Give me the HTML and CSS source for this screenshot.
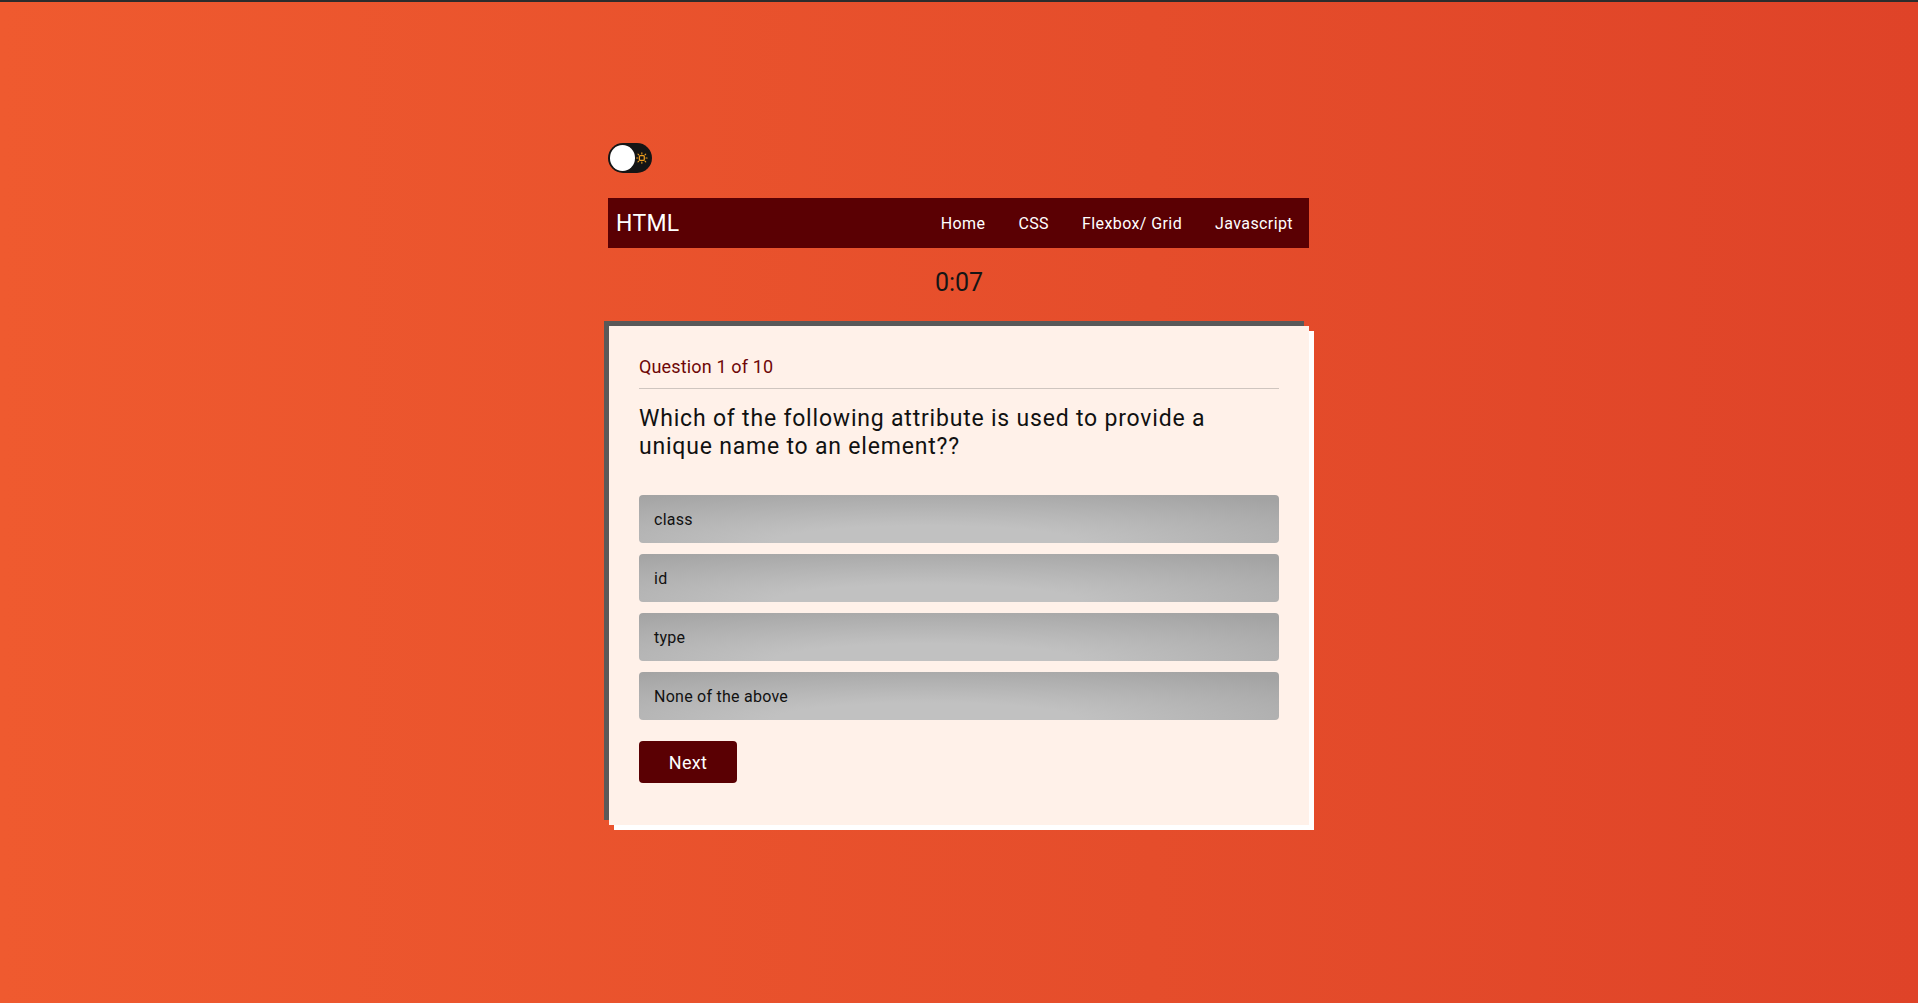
FILE: index.html
```html
<!DOCTYPE html>
<html lang="en">
<head>
<meta charset="utf-8">
<title>HTML Quiz</title>
<link rel="stylesheet" href="styles.css">
</head>
<body>
<div class="page">
  <div class="toggle">
    <span class="knob"></span>
    <svg class="sun" viewBox="0 0 12 12" width="12" height="12">
      <rect x="3.5" y="3.5" width="5" height="5" rx="1" fill="none" stroke="#f0a020" stroke-width="1.3"/>
      <g stroke="#f0a020" stroke-width="1.1" stroke-linecap="round">
        <line x1="6" y1="0.6" x2="6" y2="1.8"/>
        <line x1="6" y1="10.2" x2="6" y2="11.4"/>
        <line x1="0.6" y1="6" x2="1.8" y2="6"/>
        <line x1="10.2" y1="6" x2="11.4" y2="6"/>
        <line x1="2" y1="2" x2="2.8" y2="2.8"/>
        <line x1="9.2" y1="9.2" x2="10" y2="10"/>
        <line x1="10" y1="2" x2="9.2" y2="2.8"/>
        <line x1="2.8" y1="9.2" x2="2" y2="10"/>
      </g>
    </svg>
  </div>

  <nav class="navbar">
    <span class="brand">HTML</span>
    <ul class="links">
      <li>Home</li>
      <li>CSS</li>
      <li>Flexbox/ Grid</li>
      <li>Javascript</li>
    </ul>
  </nav>

  <div class="timer">0:07</div>

  <section class="card">
    <div class="counter">Question 1 of 10</div>
    <h2 class="question">Which of the following attribute is used to provide a unique name to an element??</h2>
    <div class="options">
      <div class="option">class</div>
      <div class="option">id</div>
      <div class="option">type</div>
      <div class="option">None of the above</div>
    </div>
    <button class="next">Next</button>
  </section>
</div>
</body>
</html>
```

FILE: styles.css
```css
html, body {
  margin: 0;
  padding: 0;
}

body {
  min-height: 1003px;
  box-sizing: border-box;
  border-top: 2px solid #2c2c2c;
  background: linear-gradient(to right, #ef5a2f 0%, #e54d2b 60%, #df4328 100%);
  font-family: Roboto, "Liberation Sans", sans-serif;
}

.page {
  width: 700px;
  margin: 0 auto;
  padding-top: 141px;
  display: flex;
  flex-direction: column;
}

.toggle {
  width: 44px;
  height: 30px;
  border-radius: 15px;
  background: #151515;
  display: flex;
  align-items: center;
  padding: 0 4px 0 2px;
  box-sizing: border-box;
  gap: 1px;
  margin-left: -1px;
}

.knob {
  width: 26px;
  height: 26px;
  border-radius: 50%;
  background: #fff;
}

.sun {
  display: block;
}

.navbar {
  margin-top: 25px;
  height: 50px;
  background: #5a0003;
  display: flex;
  align-items: center;
  justify-content: space-between;
  padding: 0 16px 0 8px;
  color: #fff;
  margin-left: -1px;
}

.brand {
  font-size: 23px;
  letter-spacing: 0.3px;
}

.links {
  list-style: none;
  margin: 0;
  padding: 0;
  display: flex;
  gap: 33px;
  font-size: 16px;
  letter-spacing: 0.4px;
}

.timer {
  margin-top: 20px;
  text-align: center;
  font-size: 25px;
  line-height: 30px;
  color: #151515;
}

.card {
  margin-top: 28px;
  background: #fff1e9;
  box-shadow: -5px -5px 0 #595959, 5px 5px 0 #ffffff;
  padding: 30px 30px 42px;
  display: flex;
  flex-direction: column;
  align-items: flex-start;
}

.counter {
  align-self: stretch;
  font-size: 18px;
  line-height: 22px;
  color: #6e0707;
  padding-bottom: 10px;
  border-bottom: 1px solid #cfc5bf;
  letter-spacing: 0.15px;
}

.question {
  margin: 16px 0 0;
  max-width: 600px;
  font-size: 23px;
  line-height: 28px;
  font-weight: 400;
  letter-spacing: 0.8px;
  color: #111;
}

.options {
  align-self: stretch;
  margin-top: 34px;
  display: flex;
  flex-direction: column;
  gap: 11px;
}

.option {
  height: 48px;
  border-radius: 4px;
  display: flex;
  align-items: center;
  padding: 0 15px;
  font-size: 16px;
  letter-spacing: 0.25px;
  color: #111;
  background: radial-gradient(ellipse 80% 120% at 45% 100%, #c1c1c1 30%, #b2b2b2 65%, #a3a3a3 100%);
}

.next {
  margin-top: 21px;
  width: 98px;
  height: 42px;
  border: none;
  border-radius: 4px;
  background: #5a0003;
  color: #fff;
  font-family: inherit;
  font-size: 18px;
  letter-spacing: 0.3px;
}
```
